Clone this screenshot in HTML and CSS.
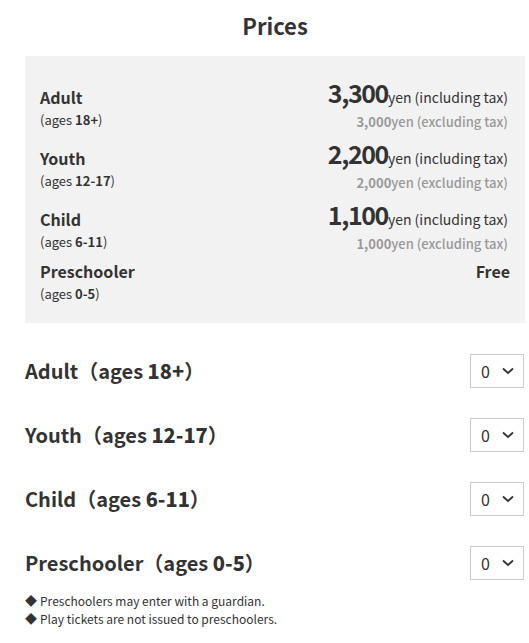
FILE: index.html
```html
<!DOCTYPE html>
<html lang="en">
<head>
    <meta charset="UTF-8">
    <meta name="viewport" content="width=device-width, initial-scale=1.0">
    <title>Prices</title>
    <link rel="stylesheet" href="styles.css">
</head>
<body>
    <div class="container">
        <h2>Prices</h2>

        <div class="price-box">
            <div class="price-row">
                <div class="who">
                    <div class="who-name">Adult</div>
                    <div class="who-ages">(ages <b>18+</b>)</div>
                </div>
                <div class="cost">
                    <div class="cost-incl"><b>3,300</b>yen (including tax)</div>
                    <div class="cost-excl"><b>3,000</b>yen (excluding tax)</div>
                </div>
            </div>
            <div class="price-row">
                <div class="who">
                    <div class="who-name">Youth</div>
                    <div class="who-ages">(ages <b>12-17</b>)</div>
                </div>
                <div class="cost">
                    <div class="cost-incl"><b>2,200</b>yen (including tax)</div>
                    <div class="cost-excl"><b>2,000</b>yen (excluding tax)</div>
                </div>
            </div>
            <div class="price-row">
                <div class="who">
                    <div class="who-name">Child</div>
                    <div class="who-ages">(ages <b>6-11</b>)</div>
                </div>
                <div class="cost">
                    <div class="cost-incl"><b>1,100</b>yen (including tax)</div>
                    <div class="cost-excl"><b>1,000</b>yen (excluding tax)</div>
                </div>
            </div>
            <div class="price-row">
                <div class="who">
                    <div class="who-name">Preschooler</div>
                    <div class="who-ages">(ages <b>0-5</b>)</div>
                </div>
                <div class="cost cost-free">Free</div>
            </div>
        </div>

        <form class="ticket-form">
            <div class="ticket-row">
                <label for="qty_adult">Adult（ages <b>18+</b>）</label>
                <div class="qty">
                    <select id="qty_adult"><option>0</option><option>1</option><option>2</option></select>
                    <svg class="chevron" viewBox="0 0 12 8"><polyline points="1,1.5 6,6 11,1.5"/></svg>
                </div>
            </div>
            <div class="ticket-row">
                <label for="qty_youth">Youth（ages <b>12-17</b>）</label>
                <div class="qty">
                    <select id="qty_youth"><option>0</option><option>1</option><option>2</option></select>
                    <svg class="chevron" viewBox="0 0 12 8"><polyline points="1,1.5 6,6 11,1.5"/></svg>
                </div>
            </div>
            <div class="ticket-row">
                <label for="qty_child">Child（ages <b>6-11</b>）</label>
                <div class="qty">
                    <select id="qty_child"><option>0</option><option>1</option><option>2</option></select>
                    <svg class="chevron" viewBox="0 0 12 8"><polyline points="1,1.5 6,6 11,1.5"/></svg>
                </div>
            </div>
            <div class="ticket-row">
                <label for="qty_pre">Preschooler（ages <b>0-5</b>）</label>
                <div class="qty">
                    <select id="qty_pre"><option>0</option><option>1</option><option>2</option></select>
                    <svg class="chevron" viewBox="0 0 12 8"><polyline points="1,1.5 6,6 11,1.5"/></svg>
                </div>
            </div>
        </form>

        <ul class="notes">
            <li>Preschoolers may enter with a guardian.</li>
            <li>Play tickets are not issued to preschoolers.</li>
        </ul>
    </div>
</body>
</html>
```

FILE: styles.css
```css
body {
    font-family: "Noto Sans CJK JP", "Noto Sans", sans-serif;
    color: #333;
    background-color: #fff;
    margin: 0;
}
.container {
    width: 500px;
    margin-left: 25px;
}
h2 {
    text-align: center;
    font-size: 22px;
    font-weight: 700;
    line-height: 30px;
    margin: 10px 0 16px;
}

/* price table */
.price-box {
    background-color: #f2f2f2;
    padding: 22px 17px 18px 15px;
}
.price-row {
    display: flex;
    justify-content: space-between;
    align-items: center;
    margin-bottom: 1px;
}
.price-row:last-child {
    margin: -2px 0 0;
}
.who-name {
    font-size: 16px;
    font-weight: 700;
    line-height: 24px;
}
.who-ages {
    font-size: 13px;
    line-height: 22px;
}
.who-ages b {
    font-weight: 700;
}
.cost {
    text-align: right;
    padding: 3px 0 7px;
}
.cost-incl {
    font-size: 14px;
    line-height: 32px;
}
.cost-incl b {
    font-size: 25px;
    font-weight: 700;
    letter-spacing: -1.4px;
    line-height: 0;
}
.cost-excl {
    font-size: 13px;
    font-weight: 500;
    line-height: 18px;
    color: #999;
}
.cost-excl b {
    font-weight: 700;
}
.cost-free {
    align-self: flex-start;
    padding: 0;
    font-size: 16px;
    font-weight: 700;
    line-height: 24px;
    margin-right: -2px;
}

/* quantity pickers */
.ticket-form {
    margin-top: 31px;
}
.ticket-row {
    display: flex;
    justify-content: space-between;
    align-items: center;
    margin-bottom: 30px;
}
.ticket-row:last-child {
    margin-bottom: 0;
}
.ticket-row label {
    font-size: 20px;
    font-weight: 700;
    line-height: 34px;
}
.ticket-row label b {
    font-weight: 900;
}
.qty {
    position: relative;
    margin-right: 1px;
}
.qty select {
    appearance: none;
    -webkit-appearance: none;
    width: 54px;
    height: 34px;
    padding: 0 0 0 10px;
    border: 1px solid #ccc;
    border-radius: 0;
    background-color: #fff;
    font-family: inherit;
    font-size: 16px;
    color: #333;
}
.chevron {
    position: absolute;
    right: 10px;
    top: 13px;
    width: 12px;
    height: 8px;
    pointer-events: none;
}
.chevron polyline {
    fill: none;
    stroke: #333;
    stroke-width: 1.8;
}

.notes {
    list-style: none;
    margin: 12px 0 0;
    padding: 0;
    font-size: 12px;
    line-height: 18px;
}
.notes li::before {
    content: "◆";
    margin-right: 3px;
}
```
